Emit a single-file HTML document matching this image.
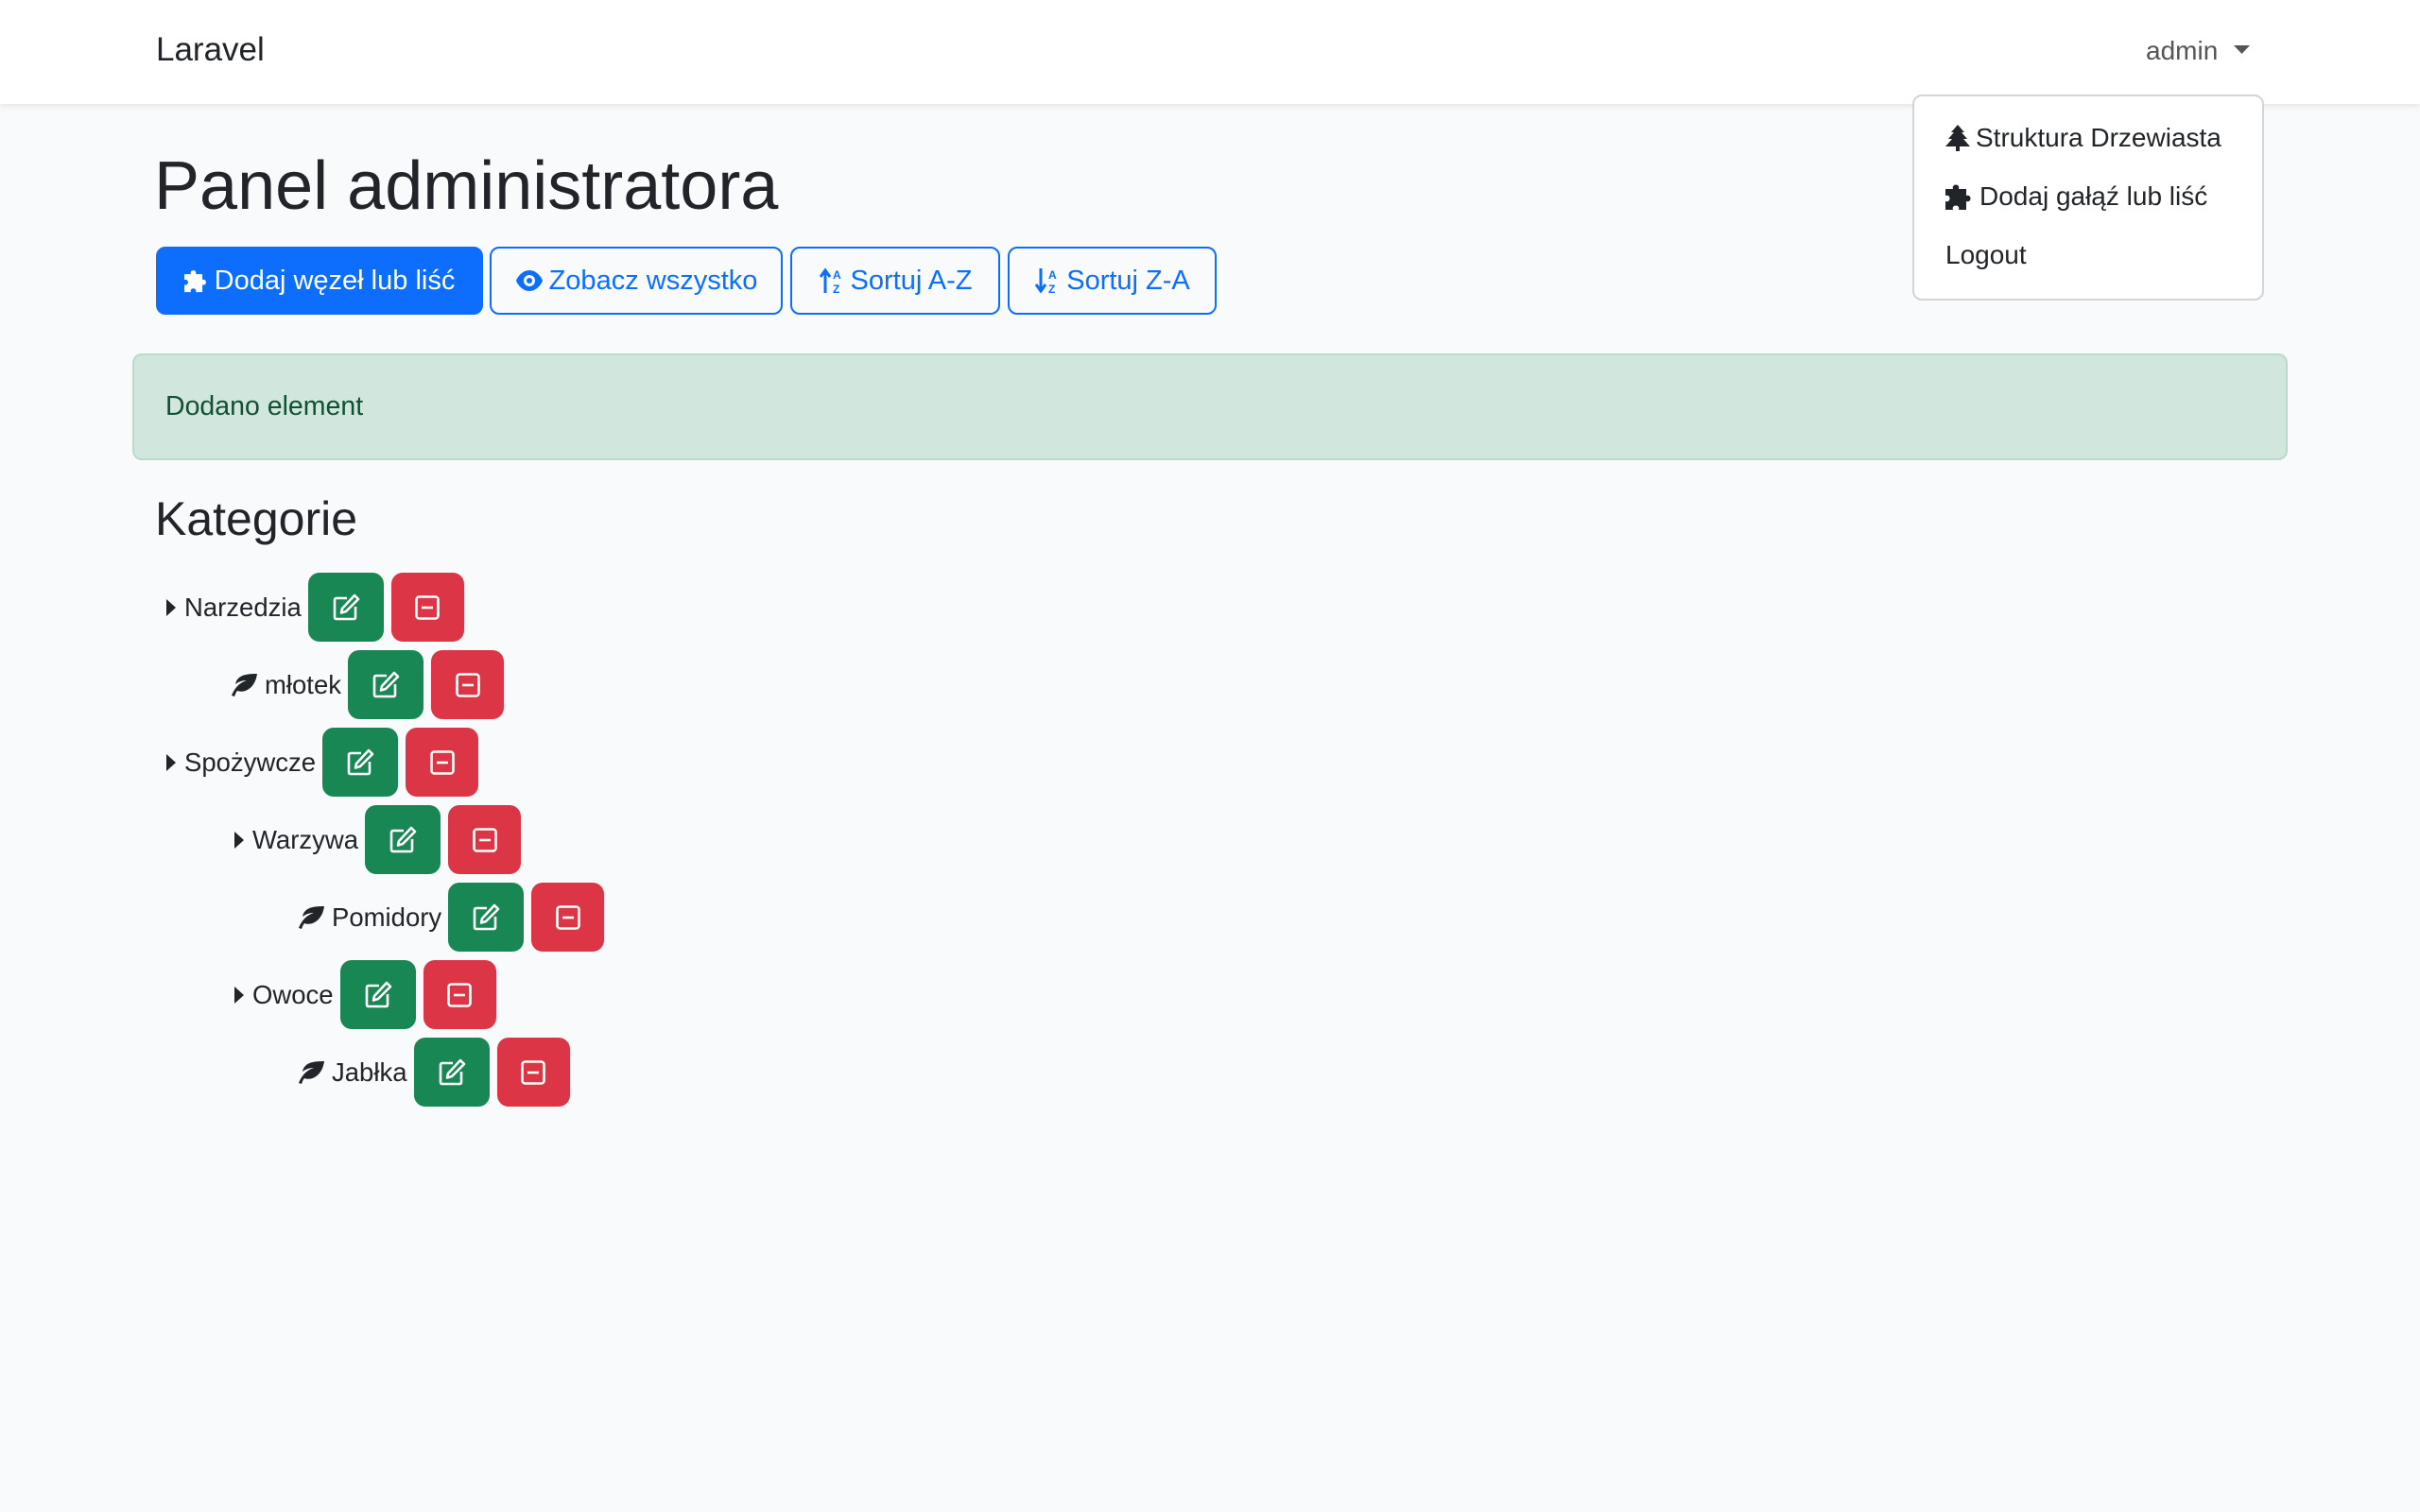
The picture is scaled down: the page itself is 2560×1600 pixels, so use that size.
<!DOCTYPE html>
<html><head><meta charset="utf-8"><style>
*{box-sizing:border-box;margin:0;padding:0}
body{width:2560px;height:1600px;background:#f8fafc;font-family:"Liberation Sans",sans-serif;color:#212529;position:relative;overflow:hidden}
.nav{position:absolute;left:0;top:0;width:2560px;height:110px;background:#fff;box-shadow:0 3px 6px rgba(0,0,0,.08)}
.abs{position:absolute}
.btn{position:absolute;top:261px;height:72px;border:2px solid #0d6efd;border-radius:10px;color:#0d6efd;font-size:29px;display:flex;align-items:center;justify-content:center;gap:6px;white-space:nowrap}
.row{position:absolute;display:flex;align-items:center;height:73px;font-size:27.5px}
.g,.r{height:73px;border-radius:12px;display:flex;align-items:center;justify-content:center}
.g{width:80px;background:#198754;margin-left:7px}
.r{width:77px;background:#dc3545;margin-left:8px}
.dd{position:absolute;left:2023px;top:100px;width:372px;height:218px;background:#fff;border:2px solid #d4d4d4;border-radius:10px}
.di{position:absolute;left:33px;font-size:28px;display:flex;align-items:center;gap:6px;white-space:nowrap}
</style></head><body>
<div class="nav"></div>
<div class="abs" style="left:165px;top:33px;font-size:35px">Laravel</div>
<div class="abs" style="left:2270px;top:38px;font-size:28px;color:#555">admin</div>
<svg class="abs" style="left:2363px;top:48px" width="17" height="9"><path d="M0 0H17L8.5 9Z" fill="#555"/></svg>

<div class="dd">
<div class="di" style="top:28px"><svg width="26" height="28" viewBox="0 0 26 28"><path d="M13 0L20 8H17L23 15H19L26 23H15V28H11V23H0L7 15H3L9 8H6Z" fill="#212529"/></svg>Struktura Drzewiasta</div>
<div class="di" style="top:90px"><svg width="30" height="28" viewBox="0 0 30 28"><path d="M0 6H8C6 0 16 0 14 6H22V13C28 11 28 21 22 19V28H14C16 22 6 22 8 28H0V19C6 21 6 11 0 13Z" fill="#212529"/></svg>Dodaj gałąź lub liść</div>
<div class="di" style="top:152px">Logout</div>
</div>

<div class="abs" style="left:163px;top:156px;font-size:72px">Panel administratora</div>

<div class="btn" style="left:165px;width:346px;background:#0d6efd;color:#fff"><svg width="26" height="26" viewBox="0 0 30 28"><path d="M0 6H8C6 0 16 0 14 6H22V13C28 11 28 21 22 19V28H14C16 22 6 22 8 28H0V19C6 21 6 11 0 13Z" fill="#fff"/></svg>Dodaj węzeł lub liść</div>
<div class="btn" style="left:518px;width:310px"><svg width="30" height="24" viewBox="0 0 30 24"><path d="M15 1C7 1 2 9 1 12C2 15 7 23 15 23C23 23 28 15 29 12C28 9 23 1 15 1Z" fill="#0d6efd"/><circle cx="15" cy="12" r="6" fill="#fff"/><circle cx="15" cy="12" r="3" fill="#0d6efd"/></svg>Zobacz wszystko</div>
<div class="btn" style="left:836px;width:222px"><svg width="28" height="28" viewBox="0 0 28 28"><path d="M7 27V5M2 10L7 3L12 10" stroke="#0d6efd" stroke-width="3" fill="none"/><text x="15" y="12" font-size="12" font-weight="bold" fill="#0d6efd" font-family="Liberation Sans">A</text><text x="15" y="27" font-size="12" font-weight="bold" fill="#0d6efd" font-family="Liberation Sans">Z</text></svg>Sortuj A-Z</div>
<div class="btn" style="left:1066px;width:221px"><svg width="28" height="28" viewBox="0 0 28 28"><path d="M7 1V23M2 18L7 25L12 18" stroke="#0d6efd" stroke-width="3" fill="none"/><text x="15" y="12" font-size="12" font-weight="bold" fill="#0d6efd" font-family="Liberation Sans">A</text><text x="15" y="27" font-size="12" font-weight="bold" fill="#0d6efd" font-family="Liberation Sans">Z</text></svg>Sortuj Z-A</div>

<div class="abs" style="left:140px;top:374px;width:2280px;height:113px;background:#d1e7dd;border:2px solid #badbcc;border-radius:10px"></div>
<div class="abs" style="left:175px;top:414px;font-size:28.5px;color:#0f5132">Dodano element</div>

<div class="abs" style="left:164px;top:520px;font-size:50px">Kategorie</div>

<svg width="0" height="0" style="position:absolute"><defs>
<symbol id="ed" viewBox="0 0 30 30"><path d="M16 5H5C3.5 5 3 6 3 7V25C3 26.5 3.5 27 5 27H23C24.5 27 25 26.5 25 25V14" stroke="#fff" stroke-width="2.6" fill="none" stroke-linejoin="round"/><path d="M24 2L28 6L15 19L10 20.5L11 16Z" stroke="#fff" stroke-width="2.6" fill="none" stroke-linejoin="round"/></symbol>
<symbol id="rm" viewBox="0 0 30 30"><rect x="3.5" y="3.5" width="23" height="23" rx="3" stroke="#fff" stroke-width="2.6" fill="none"/><path d="M9 15H21" stroke="#fff" stroke-width="2.6"/></symbol>
<symbol id="tr" viewBox="0 0 12 20"><path d="M1 1L11 10L1 19Z" fill="#212529"/></symbol>
<symbol id="lf" viewBox="0 0 30 26"><path d="M29 1C18 1 8 2 6 12C10 9 14 8 18 8C12 10 6 14 2 24L5 25C6 22 7 20 8 19C16 22 27 16 29 1Z" fill="#212529"/></symbol>
</defs></svg>

<div class="row" style="left:175px;top:606px"><svg width="12" height="20" style="margin-right:8px"><use href="#tr"/></svg>Narzedzia<div class="g"><svg width="30" height="30"><use href="#ed"/></svg></div><div class="r"><svg width="30" height="30"><use href="#rm"/></svg></div></div>
<div class="row" style="left:243px;top:688px"><svg width="30" height="26" style="margin-right:7px"><use href="#lf"/></svg>młotek<div class="g"><svg width="30" height="30"><use href="#ed"/></svg></div><div class="r"><svg width="30" height="30"><use href="#rm"/></svg></div></div>
<div class="row" style="left:175px;top:770px"><svg width="12" height="20" style="margin-right:8px"><use href="#tr"/></svg>Spożywcze<div class="g"><svg width="30" height="30"><use href="#ed"/></svg></div><div class="r"><svg width="30" height="30"><use href="#rm"/></svg></div></div>
<div class="row" style="left:247px;top:852px"><svg width="12" height="20" style="margin-right:8px"><use href="#tr"/></svg>Warzywa<div class="g"><svg width="30" height="30"><use href="#ed"/></svg></div><div class="r"><svg width="30" height="30"><use href="#rm"/></svg></div></div>
<div class="row" style="left:314px;top:934px"><svg width="30" height="26" style="margin-right:7px"><use href="#lf"/></svg>Pomidory<div class="g"><svg width="30" height="30"><use href="#ed"/></svg></div><div class="r"><svg width="30" height="30"><use href="#rm"/></svg></div></div>
<div class="row" style="left:247px;top:1016px"><svg width="12" height="20" style="margin-right:8px"><use href="#tr"/></svg>Owoce<div class="g"><svg width="30" height="30"><use href="#ed"/></svg></div><div class="r"><svg width="30" height="30"><use href="#rm"/></svg></div></div>
<div class="row" style="left:314px;top:1098px"><svg width="30" height="26" style="margin-right:7px"><use href="#lf"/></svg>Jabłka<div class="g"><svg width="30" height="30"><use href="#ed"/></svg></div><div class="r"><svg width="30" height="30"><use href="#rm"/></svg></div></div>
</body></html>
